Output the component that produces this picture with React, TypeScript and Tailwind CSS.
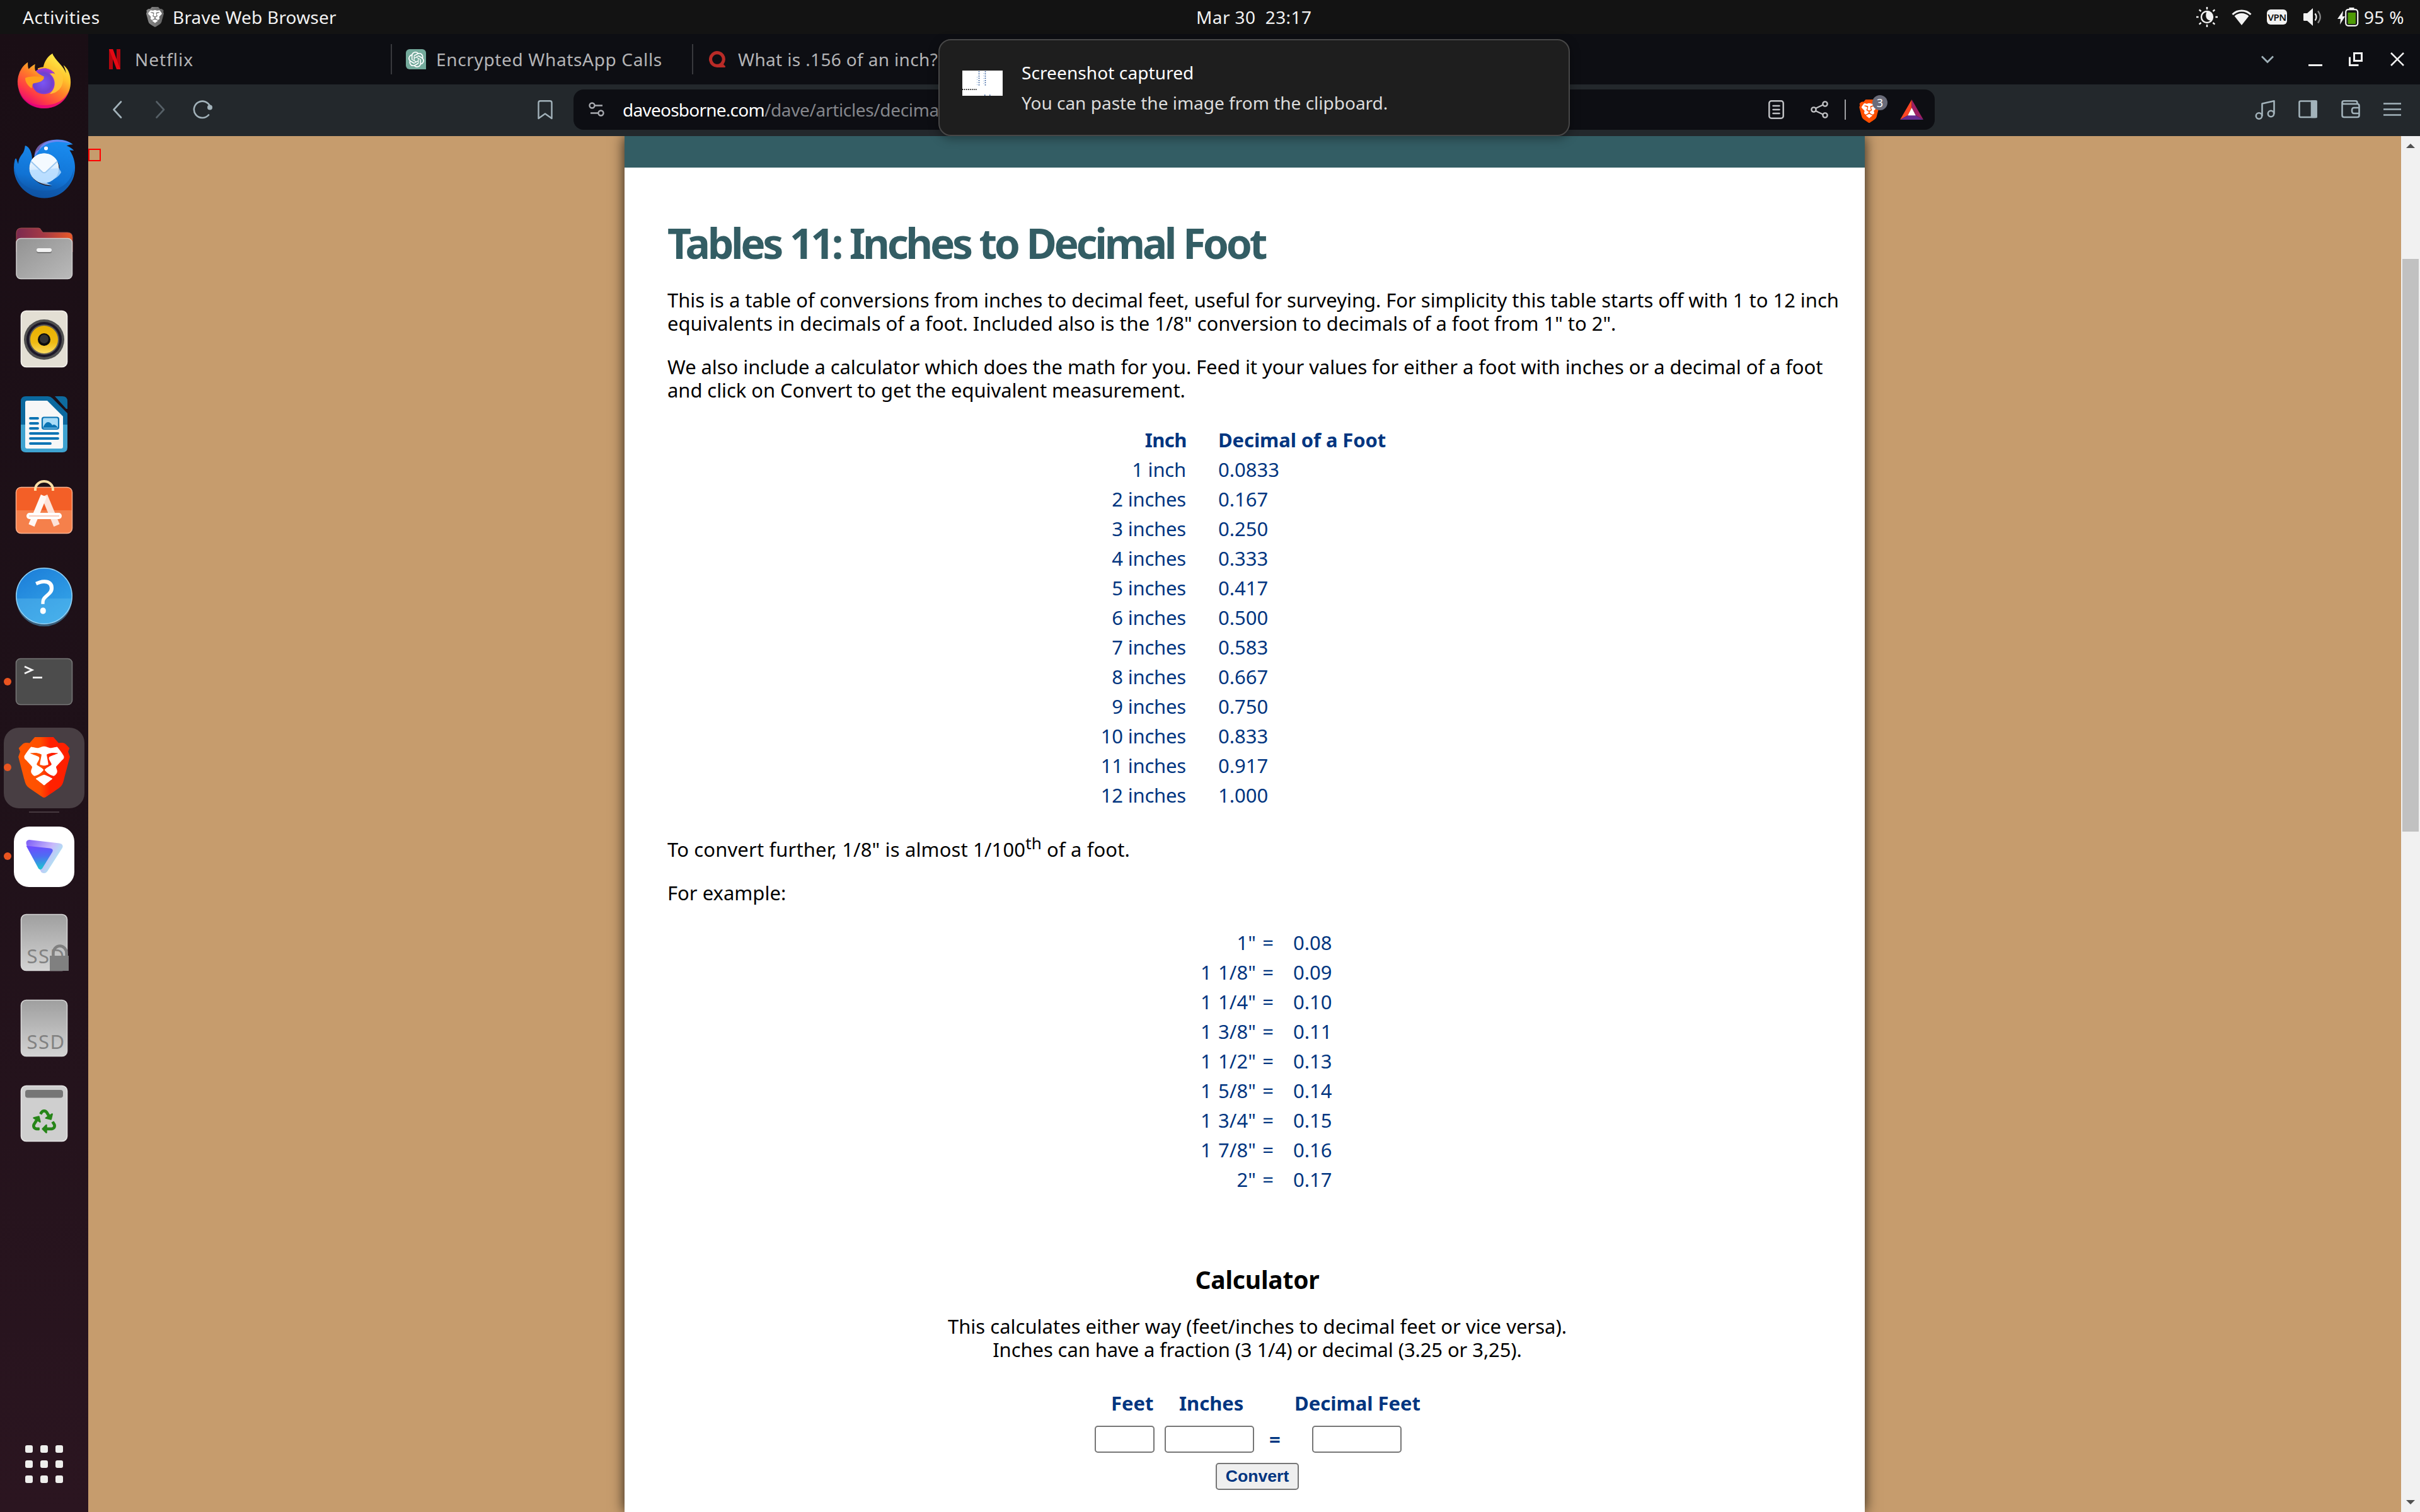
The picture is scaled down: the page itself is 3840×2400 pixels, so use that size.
import type { ReactNode } from 'react'
import { SiBrave, SiOpenai, SiQuora, SiThunderbird, SiFirefoxbrowser } from 'react-icons/si'
import { FaRecycle } from 'react-icons/fa'

const inches: [string, string][] = [
  ['1 inch', '0.0833'],
  ['2 inches', '0.167'],
  ['3 inches', '0.250'],
  ['4 inches', '0.333'],
  ['5 inches', '0.417'],
  ['6 inches', '0.500'],
  ['7 inches', '0.583'],
  ['8 inches', '0.667'],
  ['9 inches', '0.750'],
  ['10 inches', '0.833'],
  ['11 inches', '0.917'],
  ['12 inches', '1.000'],
]

const eighths: [string, string][] = [
  ['1" =', '0.08'],
  ['1 1/8" =', '0.09'],
  ['1 1/4" =', '0.10'],
  ['1 3/8" =', '0.11'],
  ['1 1/2" =', '0.13'],
  ['1 5/8" =', '0.14'],
  ['1 3/4" =', '0.15'],
  ['1 7/8" =', '0.16'],
  ['2" =', '0.17'],
]

const FACE = '4,3.4 20,3.4 20.6,8 18.2,17 12,20.2 5.8,17 3.4,8'

/* ---------- top bar ---------- */

function NightLight() {
  return (
    <svg className="h-8 w-[34px]" viewBox="0 0 34 32" fill="none" stroke="#f2f2f2" strokeWidth="2.4">
      <circle cx="17" cy="16" r="9" />
      <path d="M17 0v4M17 28v4M0 16h3.6M30.4 16H34M4.6 4.4l3 2.6M29.4 4.4l-3 2.6M4.6 27.6l3-2.6M29.4 27.6l-3-2.6" />
      <path d="M17 7a9 9 0 0 1 7 14.6c-8 1-11-8-7-14.600z" fill="#f2f2f2" stroke="none" />
    </svg>
  )
}

function Wifi() {
  return (
    <svg className="h-[25px] w-8" viewBox="0 0 32 25">
      <path d="M1.500 8A20.500 20.500 0 0 1 30.500 8" fill="none" stroke="#f2f2f2" strokeWidth="3" />
      <path d="M16 25 4.600 10.500a16.500 16.500 0 0 1 22.800 0z" fill="#f2f2f2" />
    </svg>
  )
}

function Volume() {
  return (
    <svg className="h-7 w-[30px]" viewBox="0 0 30 28" fill="none">
      <path d="M0 9q0-1 1-1h5l9-8v28l-9-8H1q-1 0-1-1z" fill="#f2f2f2" />
      <path d="M18.500 8.500q4 5.500 0 11" stroke="#f2f2f2" strokeWidth="2.200" />
      <path d="M23 4.500q7.500 9.500 0 19" stroke="#8a8a8a" strokeWidth="2.200" />
    </svg>
  )
}

function Battery() {
  return (
    <svg className="h-[30px] w-[34px]" viewBox="0 0 34 30">
      <path d="M9 5 0 18h5l-1 9 8-13H8z" fill="#f2f2f2" />
      <rect x="18.500" y="0" width="8" height="4" fill="#f2f2f2" />
      <rect x="13.200" y="3.200" width="19" height="25.600" rx="4" fill="#131313" stroke="#f2f2f2" strokeWidth="2.200" />
      <rect x="16.500" y="8" width="12.400" height="18" fill="#4e9a06" />
    </svg>
  )
}

function TopBar() {
  return (
    <header className="flex h-[54px] shrink-0 items-center bg-[#131313] text-[28px] leading-[54px] text-[#f2f2f2]">
      <div className="w-[232px] pl-[36px] tracking-[0.6px]">Activities</div>
      <svg className="mr-[14px] h-8 w-7" viewBox="1.800 0 20.400 24" preserveAspectRatio="none">
        <defs>
          <linearGradient id="greyBrave">
            <stop offset="0" stopColor="#8b8b8b" />
            <stop offset="1" stopColor="#626262" />
          </linearGradient>
        </defs>
        <polygon points={FACE} fill="#fff" />
        <SiBrave x="0" y="0" size={24} fill="url(#greyBrave)" />
      </svg>
      <div className="w-[1624px] tracking-[0.200px]">Brave Web Browser</div>
      <div className="w-[1587px] whitespace-pre tracking-[0.400px]">Mar 30  23:17</div>
      <NightLight />
      <div className="ml-[22px]"><Wifi /></div>
      <div className="ml-6 flex h-6 w-8 items-center justify-center rounded-[6px] bg-[#f2f2f2] text-[15px] font-semibold leading-none tracking-[-0.500px] text-[#131313]">VPN</div>
      <div className="ml-[26px]"><Volume /></div>
      <div className="ml-[24px]"><Battery /></div>
      <div className="ml-[8px] tracking-[0.300px]">95 %</div>
    </header>
  )
}

/* ---------- dock ---------- */

function Cell({ y, dot, active, children }: { y: number; dot?: boolean; active?: boolean; children: ReactNode }) {
  return (
    <svg className="block h-[136px] w-[140px] shrink-0" viewBox={`0 ${y} 140 136`}>
      {active && <rect x="6" y={y + 4} width="128" height="128" rx="24" fill="#483e43" />}
      {dot && <circle cx="12" cy={y + 67} r="6" fill="#e95420" />}
      {children}
    </svg>
  )
}

function Drive({ y }: { y: number }) {
  return (
    <>
      <rect x="33.500" y={y + 23.500} width="73" height="89" rx="8" fill="url(#drive)" stroke="#d6d6d6" strokeWidth="1.600" />
      <text x="42.500" y={y + 101} fontSize="31" letterSpacing="1.500" fill="#828282">SSD</text>
    </>
  )
}

function Dock() {
  return (
    <nav className="flex w-[140px] shrink-0 flex-col bg-linear-to-b from-[#1a0e15] via-[#1f1119] to-[#2b1520] pt-[9px]">
      <Cell y={63}>
        <defs>
          <linearGradient id="fox" x1="0.850" y1="0.050" x2="0.250" y2="1">
            <stop offset="0" stopColor="#fff34f" />
            <stop offset="0.300" stopColor="#ffc32c" />
            <stop offset="0.520" stopColor="#ff7f28" />
            <stop offset="0.780" stopColor="#ff3a45" />
            <stop offset="1" stopColor="#e5007d" />
          </linearGradient>
          <radialGradient id="globe" cx="0.450" cy="0.550" r="0.600">
            <stop offset="0" stopColor="#7a55f5" />
            <stop offset="0.600" stopColor="#6f41cf" />
            <stop offset="1" stopColor="#b833e1" />
          </radialGradient>
          <linearGradient id="bird" x1="0.600" y1="0" x2="0.400" y2="1">
            <stop offset="0" stopColor="#1a8cf0" />
            <stop offset="0.650" stopColor="#1173d4" />
            <stop offset="1" stopColor="#0f4f9c" />
          </linearGradient>
          <linearGradient id="mail" x1="0" y1="0" x2="0" y2="1">
            <stop offset="0" stopColor="#ffffff" />
            <stop offset="1" stopColor="#b6dcff" />
          </linearGradient>
          <linearGradient id="folderBack">
            <stop offset="0" stopColor="#7b2a50" />
            <stop offset="0.500" stopColor="#a63a44" />
            <stop offset="1" stopColor="#ea5a28" />
          </linearGradient>
          <linearGradient id="folderFront" x1="0" y1="0" x2="1" y2="1">
            <stop offset="0" stopColor="#929292" />
            <stop offset="1" stopColor="#bababa" />
          </linearGradient>
          <linearGradient id="cone" x1="0" y1="0" x2="0" y2="1">
            <stop offset="0" stopColor="#e8b000" />
            <stop offset="0.600" stopColor="#efba12" />
            <stop offset="1" stopColor="#fbdc60" />
          </linearGradient>
          <linearGradient id="help" x1="0" y1="0" x2="0.600" y2="1">
            <stop offset="0" stopColor="#1a7bd8" />
            <stop offset="1" stopColor="#35a5e8" />
          </linearGradient>
          <linearGradient id="brave">
            <stop offset="0" stopColor="#ff5601" />
            <stop offset="0.420" stopColor="#ff5000" />
            <stop offset="0.620" stopColor="#ff2000" />
            <stop offset="1" stopColor="#ff2000" />
          </linearGradient>
          <linearGradient id="vpnBack" x1="0" y1="0" x2="1" y2="0.600">
            <stop offset="0" stopColor="#7c5cf6" />
            <stop offset="0.600" stopColor="#c8b8fb" />
            <stop offset="1" stopColor="#a5f5ee" />
          </linearGradient>
          <linearGradient id="vpnFront" x1="0.400" y1="0" x2="0.500" y2="1">
            <stop offset="0" stopColor="#6d4aff" />
            <stop offset="0.450" stopColor="#4f6cf3" />
            <stop offset="1" stopColor="#19c9cf" />
          </linearGradient>
          <linearGradient id="drive" x1="0" y1="0" x2="0" y2="1">
            <stop offset="0" stopColor="#9f9f9f" />
            <stop offset="1" stopColor="#d3d3d3" />
          </linearGradient>
        </defs>
        <ellipse cx="70" cy="129" rx="21" ry="21" fill="url(#globe)" />
        <SiFirefoxbrowser x="26.500" y="85" size={87} fill="url(#fox)" />
        <path d="M80 118c9 8 9 22-1 31 14-1 24-14 20-29-4-10-12-14-20-13 5 4 7 6 8 10-3-1-5-1-7 1z" fill="#ffc93a" opacity="0.850" />
        <path d="M40 124c6-3 22-4 30 0-3 6-10 7-15 8-5 0-3 7-5 8-6-4-10-10-10-16z" fill="#ffa11c" />
        <path d="M29 141c5 17 21 27 41 26 20 0 34-9 40-24-5 18-20 29-40 29-21 0-37-13-41-31z" fill="#e5007d" opacity="0.750" />
      </Cell>

      <Cell y={199}>
        <circle cx="73" cy="236" r="3.500" fill="#fff" />
        <SiThunderbird x="22" y="219.500" size={97} fill="url(#bird)" />
        <path d="M55 248c-1-16 15-27 36-26 10 0 18 3 22 6-18-5-34-4-44 4-9 6-9 12-14 16z" fill="#9a84ee" opacity="0.650" />
        <path d="M23 262c2 30 24 41 47 41 24 0 42-11 47-35 0 30-24 46-47 46s-48-18-47-52z" fill="#0f55a8" opacity="0.550" />
        <circle cx="70" cy="267" r="23.500" fill="url(#mail)" />
        <path d="M47 270c3 13 14 24 36 24-8-2-12-6-14-9 13 3 22-2 28-11 0-3-3-4-3-7z" fill="#b6dcff" opacity="0.800" />
        <path d="M49 256l18 16q3 3 6 0l18-16q-7-12.500-21-12.500T49 256z" fill="#f4faff" />
        <path d="M49 256l18 17q3 2.500 6 0l18-17" fill="none" stroke="#9cc8f0" strokeWidth="1.800" />
        <circle cx="73" cy="235.500" r="3" fill="#fff" />
      </Cell>

      <Cell y={335}>
        <path d="M26 400v-30q0-8 8-8h27q3 0 4 3l3 4h39q8 0 8 8v23z" fill="url(#folderBack)" stroke="#a4514c" strokeWidth="1" />
        <rect x="26" y="378.500" width="88.500" height="64" rx="7" fill="url(#folderFront)" stroke="#cfcfcf" strokeWidth="1.500" />
        <rect x="58" y="396" width="24" height="6" rx="3" fill="#777" />
        <rect x="58" y="394" width="24" height="6" rx="3" fill="#f2f2f2" />
      </Cell>

      <Cell y={471}>
        <rect x="33.500" y="493.500" width="73" height="89" rx="8" fill="#e3dfd4" stroke="#f5f3ee" strokeWidth="1.600" />
        <circle cx="70" cy="539" r="32" fill="#4f4f4f" />
        <circle cx="70" cy="539" r="28" fill="#1c1828" />
        <circle cx="70" cy="539" r="24" fill="#5f5c55" />
        <circle cx="70" cy="539" r="22" fill="url(#cone)" />
        <circle cx="70" cy="539" r="10" fill="#0c0c0c" />
        <circle cx="70" cy="538" r="7" fill="#333" />
      </Cell>

      <Cell y={607}>
        <path d="M41 629h35q4 0 7 3l24 24v22H33v-41q0-8 8-8z" fill="#0b699f" />
        <path d="M33 674h74v36q0 8-8 8H41q-8 0-8-8z" fill="#3fa3d0" />
        <path d="M87 629h12q8 0 8 8v12h-2z" fill="#0e6b9f" />
        <path d="M43 636h32l25 25v48q0 3-3 3H43q-3 0-3-3v-70q0-3 3-3z" fill="#f7f7f7" />
        <path d="M48 664h12M48 672h12M48 680h12M48 688h44M48 696h44M48 704h32" stroke="#0b74b4" strokeWidth="3.800" strokeLinecap="round" />
        <rect x="67" y="662.500" width="26" height="18.500" rx="3" fill="#a9dcf7" stroke="#0b74b4" strokeWidth="2.200" />
        <path d="M68 679q4-9 8-9t7 5q4-3 9 4z" fill="#0b74b4" />
      </Cell>

      <Cell y={743}>
        <rect x="25.500" y="773.500" width="89" height="73" rx="8" fill="#f35f27" />
        <path d="M25.500 810h89v28.500q0 8-8 8h-73q-8 0-8-8z" fill="#f5804b" />
        <rect x="25.500" y="773.500" width="89" height="73" rx="8" fill="none" stroke="#f9b08e" strokeWidth="1.500" />
        <path d="M56 779v-2a14 13 0 0 1 28 0v2" fill="none" stroke="#ffdfa6" strokeWidth="4" />
        <path d="M90 834 70.500 787" stroke="#fde3d8" strokeWidth="10" />
        <path d="M50 834 69.500 787" stroke="#fff8f4" strokeWidth="10" />
        <rect x="42" y="814" width="56" height="10" rx="5" fill="#fff" />
        <path d="M46 819h48" stroke="#f9cdbb" strokeWidth="2" />
      </Cell>

      <Cell y={879}>
        <circle cx="70" cy="946" r="44.300" fill="url(#help)" />
        <path d="M25.700 950a44.300 44.300 0 0 0 88.600 0z" fill="#5cbbee" opacity="0.450" />
        <circle cx="70" cy="946" r="44.300" fill="none" stroke="#8fd0f5" strokeWidth="1.500" />
        <text x="71" y="974" textAnchor="middle" fontSize="73" fill="#fff">?</text>
      </Cell>

      <Cell y={1015} dot>
        <rect x="25.500" y="1045.500" width="89" height="73" rx="7" fill="#4c4c4c" stroke="#767676" strokeWidth="1.600" />
        <path d="M39 1058l12 5.500-12 5.500" fill="none" stroke="#f4f4f4" strokeWidth="2.800" />
        <path d="M52 1075.500h15" stroke="#f4f4f4" strokeWidth="2.800" />
      </Cell>

      <Cell y={1151} dot active>
        <svg x="22" y="1170" width="96" height="96" viewBox="0 0 24 24">
          <polygon points={FACE} fill="#fff" />
          <SiBrave x="0" y="0" size={24} fill="url(#brave)" />
        </svg>
      </Cell>

      <div className="mx-auto mb-[2px] mt-px h-[2px] w-12 shrink-0 bg-[#46393f]" />

      <Cell y={1292} dot>
        <rect x="22" y="1312" width="96" height="96" rx="24" fill="#fff" />
        <path d="M46 1333l48 5.500q8 1.500 4.500 8l-23 36q-4 6-10 2L42 1341q-2-7 4-8z" fill="url(#vpnBack)" />
        <path d="M41.500 1342.500l38 4q6 1 3.500 6l-16 26q-3 3.500-6 0z" fill="url(#vpnFront)" />
      </Cell>

      <Cell y={1428}>
        <Drive y={1428} />
        <path d="M84.500 1520v-7a10.500 11.500 0 0 1 21 0v7" fill="none" stroke="#808080" strokeWidth="4.500" />
        <rect x="79" y="1517" width="30" height="24" fill="#808080" />
      </Cell>

      <Cell y={1564}>
        <Drive y={1564} />
      </Cell>

      <Cell y={1700}>
        <rect x="33.500" y="1723.500" width="73" height="88" rx="8" fill="#cfcfcf" stroke="#e4e4e4" strokeWidth="1.600" />
        <rect x="40" y="1730" width="60" height="12.500" rx="4" fill="#767676" />
        <FaRecycle x="51" y="1761" size={38} fill="#268518" />
      </Cell>

      <div className="mb-[46px] ml-10 mt-auto grid w-[60px] grid-cols-3 gap-3">
        {Array.from({ length: 9 }, (_, i) => (
          <div key={i} className="size-3 rounded-[3px] bg-[#eeeeec]" />
        ))}
      </div>
    </nav>
  )
}

/* ---------- browser chrome ---------- */

function TabStrip() {
  return (
    <div className="flex h-20 items-center bg-[#0d0e13] text-[28px] leading-[80px] text-[#b4b4b6]">
      <svg className="ml-[33px] h-8 w-[18px]" viewBox="0 0 18 32">
        <path d="M0 0h6v32q-3 0-6 .4zM12 0h6v32.400q-3-.4-6-.4z" fill="#b1060f" />
        <path d="M0 0h6.200L18 32.400q-3-.5-6-.6z" fill="#e50914" />
      </svg>
      <div className="ml-[23px] w-[406px] tracking-[1px]">Netflix</div>
      <div className="h-12 w-[2px] bg-[#38393d]" />
      <div className="ml-[22px] flex size-8 items-center justify-center rounded-[6px] rounded-br-none bg-[#74aa9c]">
        <SiOpenai className="size-[25px] text-white" />
      </div>
      <div className="ml-[16px] w-[406px] tracking-[0.650px]">Encrypted WhatsApp Calls</div>
      <div className="h-12 w-[2px] bg-[#38393d]" />
      <SiQuora className="ml-[25px] size-[26px] text-[#b92b27]" />
      <div className="ml-[20px] tracking-[0.350px]">What is .156 of an inch?</div>

      <svg className="ml-auto mr-[24px] h-[72px] w-[231px]" viewBox="3585 58 231 72" fill="none" stroke="#f1f1f1" strokeWidth="3">
        <path d="M3589 89.500l9 9 9-9" stroke="#9fb0b8" strokeWidth="2.800" />
        <path d="M3663 103.500h22" />
        <path d="M3735.500 84.500h12v12h-12zM3728.500 90.500v13h14" />
        <path d="M3794 84l20 20M3814 84l-20 20" strokeWidth="2.600" />
      </svg>
    </div>
  )
}

function AddressBar() {
  return (
    <div className="flex h-16 w-[2160px] items-center rounded-[16px] bg-[#0d0e13] text-[28px] leading-[64px]">
      <svg className="ml-6 h-6 w-[26px]" viewBox="0 0 26 24" fill="none" stroke="#a9abb0" strokeWidth="2.400">
        <circle cx="5.500" cy="5.500" r="4" />
        <path d="M10 5.500h12M3 17.500h12" />
        <circle cx="19.500" cy="17.500" r="4" />
      </svg>
      <div className="ml-[28px] tracking-[-0.750px] text-white">daveosborne.com</div>
      <div className="tracking-[-0.350px] text-[#84868b]">/dave/articles/decima</div>

      <div className="ml-auto flex items-center">
        <svg className="h-[30px] w-[25px]" viewBox="0 0 25 30" fill="none" stroke="#bfc0c3" strokeWidth="2.500" strokeLinecap="round">
          <rect x="1.300" y="1.300" width="22.400" height="27.400" rx="3.500" />
          <path d="M7.500 9h10M7.500 15h10M7.500 21h10" />
        </svg>
        <svg className="ml-[42px] h-7 w-7" viewBox="0 0 28 28" fill="none" stroke="#bfc0c3" strokeWidth="2.400">
          <circle cx="5" cy="14" r="3.600" />
          <circle cx="23" cy="5" r="3.600" />
          <circle cx="23" cy="23" r="3.600" />
          <path d="M8 12l11.500-5.500M8 16l11.500 5.500" />
        </svg>
        <div className="ml-[26px] h-8 w-[2px] bg-[#9fa0a4]" />
        <svg className="ml-[21px] h-[50px] w-[48px]" viewBox="0 0 48 50">
          <svg x="0" y="9" width="32" height="37" viewBox="1.800 0 20.400 24">
            <polygon points={FACE} fill="#fff" />
            <SiBrave x="0" y="0" size={24} fill="#ff4f00" />
          </svg>
          <circle cx="33" cy="14" r="12" fill="#6a6c7a" />
          <text x="33" y="20.500" textAnchor="middle" fontSize="18" fill="#fff">3</text>
        </svg>
        <svg className="ml-[17px] mr-[18px] h-8 w-[37px]" viewBox="0 0 37 32">
          <path d="M18.500 0 0 32l12.500-7 6-12z" fill="#ff4724" />
          <path d="M18.500 0 37 32l-12.500-7-6-12z" fill="#9e1f63" />
          <path d="M0 32h37l-12.500-7h-12z" fill="#662d91" />
          <path d="M18.500 13l6.300 12.200H12.200z" fill="#fff" />
        </svg>
      </div>
    </div>
  )
}

function Toolbar() {
  return (
    <div className="flex h-[82px] items-center bg-[#23282c] pb-[2px]">
      <svg className="ml-[37px] h-8 w-[164px]" viewBox="177 158 164 32" fill="none" stroke="#a2b2ba" strokeWidth="2.600" strokeLinecap="round" strokeLinejoin="round">
        <path d="M192 161.500l-11.500 12.500L192 186.500" />
        <path d="M248.500 161.500l11.500 12.500-11.500 12.500" stroke="#566067" />
        <path d="M333.500 169.500A13.200 13.200 0 1 0 331 182.500" />
        <circle cx="333" cy="170.500" r="4" fill="#a2b2ba" stroke="none" />
      </svg>
      <svg className="ml-[512px] h-[31px] w-6" viewBox="0 0 24 31" fill="none" stroke="#a2b2ba" strokeWidth="2.400" strokeLinejoin="round">
        <path d="M1.500 29V4q0-2.700 2.700-2.700h15.600q2.700 0 2.700 2.700v25L12 21.500z" />
      </svg>
      <div className="ml-[33px]"><AddressBar /></div>
      <svg className="ml-auto mr-[29px] h-8 w-[235px]" viewBox="3576 159 235 32" fill="none" stroke="#a2b2ba" strokeWidth="2.600" strokeLinejoin="round">
        <circle cx="3584.500" cy="185" r="4.700" />
        <circle cx="3603.500" cy="181.500" r="4.700" />
        <path d="M3589.500 185v-19.500l19-4.200v20.200" />
        <rect x="3648.500" y="161.500" width="27" height="25.500" rx="2" />
        <path d="M3668 161.500h7.500v25.500h-7.500z" fill="#a2b2ba" />
        <path d="M3716.500 164v20q0 3 3 3h21q3 0 3-3v-15q0-3-3-3h-21q-3 0-3-2.300t3-2.500h18q3 0 3 3v2" />
        <path d="M3744 172h-9q-3 0-3 4.500t3 4.500h9" />
        <path d="M3782 165.500h28M3782 174.500h28M3782 183.500h28" />
      </svg>
    </div>
  )
}

/* ---------- web page ---------- */

function Pairs({ rows, lead, gap }: { rows: [string, string][]; lead: string; gap: string }) {
  return (
    <>
      {rows.map(([a, b]) => (
        <div key={a} className={`flex h-[47px] leading-[47px] ${gap}`}>
          <div className={`text-right ${lead}`}>{a}</div>
          <div>{b}</div>
        </div>
      ))}
    </>
  )
}

function Sheet() {
  return (
    <article className="flex w-[1968px] shrink-0 flex-col bg-white shadow-[0_0_20px_rgba(0,0,0,0.800)]">
      <div className="h-[50px] shrink-0 bg-[#335d64]" />
      <div className="pl-[68px] pr-7 pt-20 text-[31px] leading-[37px] text-black">
        <h1 className="text-[66px] font-bold leading-[78px] tracking-[-4.350px] text-[#335d64] [word-spacing:1px]">Tables 11: Inches to Decimal Foot</h1>
        <p className="mt-[34px] whitespace-nowrap tracking-[-0.040px]">
          This is a table of conversions from inches to decimal feet, useful for surveying. For simplicity this table starts off with 1 to 12 inch
          <br />
          equivalents in decimals of a foot. Included also is the 1/8" conversion to decimals of a foot from 1" to 2".
        </p>
        <p className="mt-8 whitespace-nowrap tracking-[-0.075px]">
          We also include a calculator which does the math for you. Feed it your values for either a foot with inches or a decimal of a foot
          <br />
          and click on Convert to get the equivalent measurement.
        </p>

        <section className="mt-[37px] text-[#003580]">
          <div className="flex h-[47px] gap-[50px] font-bold leading-[47px]">
            <div className="w-[824px] text-right tracking-[-0.500px]">Inch</div>
            <div className="tracking-[-0.100px]">Decimal of a Foot</div>
          </div>
          <Pairs rows={inches} lead="w-[823px] tracking-[-0.200px]" gap="gap-[51px]" />
        </section>

        <p className="mt-[44px] h-[37px] whitespace-nowrap tracking-[0.130px]">
          To convert further, 1/8" is almost 1/100<sup className="top-[-12px] text-[26px] leading-none">th</sup> of a foot.
        </p>
        <p className="mt-8">For example:</p>

        <section className="mt-[37px] text-[#003580]">
          <Pairs rows={eighths} lead="w-[962px] tracking-[0.100px] [word-spacing:2px]" gap="gap-[31px]" />
        </section>

        <section className="mt-[112px] flex flex-col items-center">
          <h2 className="text-[39px] font-bold leading-[46px] tracking-[-0.200px]">Calculator</h2>
          <p className="mt-[33px] text-center">
            This calculates either way (feet/inches to decimal feet or vice versa).
            <br />
            <span className="tracking-[-0.100px]">Inches can have a fraction (3 1/4) or decimal (3.25 or 3,25).</span>
          </p>
        </section>

        <section className="mt-[43px] font-bold text-[#003580]">
          <div className="flex h-[47px] leading-[47px]">
            <div className="ml-[704px] w-[108px]">Feet</div>
            <div className="w-[183px]">Inches</div>
            <div>Decimal Feet</div>
          </div>
          <div className="ml-[678px] mt-[12px] flex h-[43px] items-center">
            <div className="h-[43px] w-[95px] rounded-[5px] border-2 border-[#767676] bg-white" />
            <div className="ml-4 h-[43px] w-[142px] rounded-[5px] border-2 border-[#767676] bg-white" />
            <div className="ml-6 w-[68px]">=</div>
            <div className="h-[43px] w-[142px] rounded-[5px] border-2 border-[#767676] bg-white" />
          </div>
          <button className="ml-[870px] mt-4 flex h-[43px] w-[132px] items-center justify-center rounded-[5px] border-2 border-[#767676] bg-[#efefef] font-['Liberation_Sans',sans-serif] text-[26.670px] font-bold leading-none">
            Convert
          </button>
        </section>
      </div>
    </article>
  )
}

function Scrollbar() {
  return (
    <div className="flex w-[30px] shrink-0 flex-col items-center bg-[#f1f1f1]">
      <svg className="mt-3 h-[7px] w-[14px] shrink-0" viewBox="0 0 14 7"><path d="M0 7 7 0l7 7z" fill="#505050" /></svg>
      <div className="mt-[176px] h-[909px] w-[26px] shrink-0 bg-[#c1c1c1]" />
      <svg className="mb-3 mt-auto h-[7px] w-[14px] shrink-0" viewBox="0 0 14 7"><path d="M0 0h14L7 7z" fill="#505050" /></svg>
    </div>
  )
}

function Page() {
  return (
    <div className="flex h-[2184px] overflow-hidden bg-[#c69c6d]">
      <div className="w-[851px] shrink-0 pt-5">
        <div className="h-5 w-5 border-2 border-[#ff0000]" />
      </div>
      <Sheet />
      <div className="grow" />
      <Scrollbar />
    </div>
  )
}

function Notification() {
  return (
    <div className="absolute left-[1489px] top-[62px] flex h-[154px] w-[1002px] items-center rounded-[20px] border-2 border-[#474747] bg-[#1e1e1e] shadow-[0_4px_16px_rgba(0,0,0,0.350)]">
      <svg className="ml-9 mt-[-14px] h-10 w-16 bg-white" viewBox="0 0 64 40">
        <path d="M26.500 1v23M36.500 1v23" stroke="#1d4a8f" strokeWidth="1.600" strokeDasharray="1.500 2" />
        <path d="M23.500 10v14M34 4v20" stroke="#6f9fd8" strokeWidth="1" strokeDasharray="1 3" />
        <path d="M0 30h24" stroke="#222" strokeWidth="2" strokeDasharray="1.500 1.500" />
        <path d="M35 39h1.500M43 39h1.500" stroke="#1d4a8f" strokeWidth="1.500" />
      </svg>
      <div className="ml-[30px] text-[28px] leading-[48px]">
        <div className="tracking-[0.100px] text-white">Screenshot captured</div>
        <div className="text-[#dcdcdc]">You can paste the image from the clipboard.</div>
      </div>
    </div>
  )
}

export default function App() {
  return (
    <div className="relative flex h-[2400px] w-[3840px] flex-col overflow-hidden font-['Noto_Sans',sans-serif]">
      <TopBar />
      <div className="flex min-h-0 grow">
        <Dock />
        <main className="flex w-[3700px] shrink-0 flex-col">
          <TabStrip />
          <Toolbar />
          <Page />
        </main>
      </div>
      <Notification />
    </div>
  )
}
